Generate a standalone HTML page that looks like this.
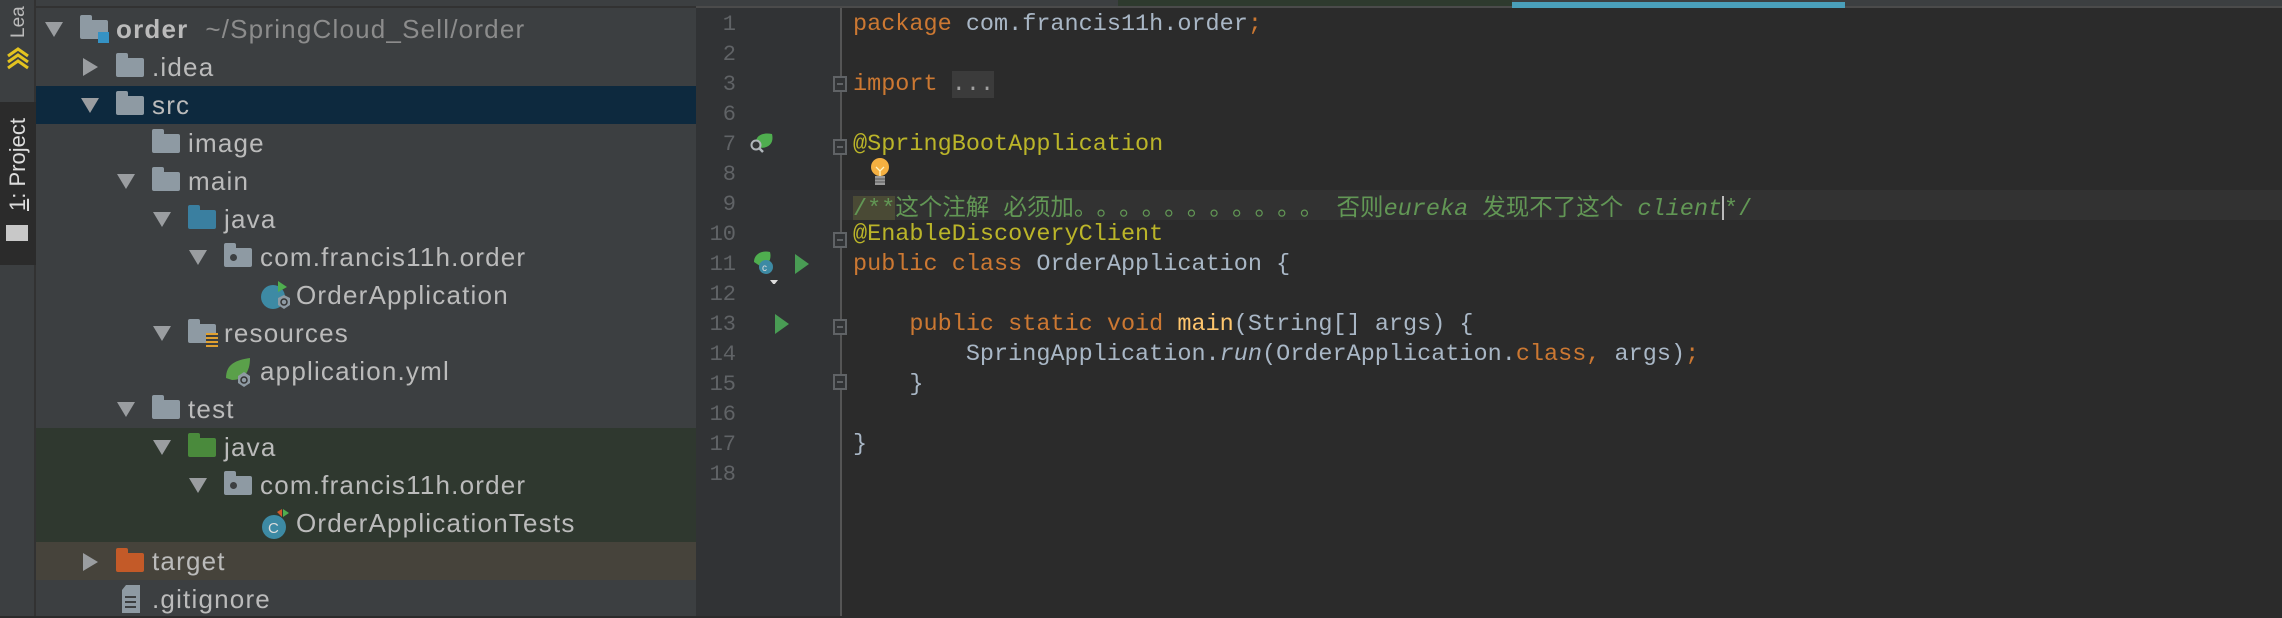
<!DOCTYPE html>
<html><head><meta charset="utf-8">
<style>
*{margin:0;padding:0;box-sizing:border-box}
body{width:2282px;height:616px;overflow:hidden;background:#2b2b2b;position:relative;font-family:"Liberation Sans","Noto Sans CJK SC",sans-serif}
.abs{position:absolute}
#strip{left:0;top:0;width:36px;height:616px;background:#3c3f41;border-right:2px solid #323232}
#ptab{left:0;top:102px;width:36px;height:163px;background:#2b2b2b}
#panel{left:36px;top:0;width:660px;height:616px;background:#3c3f41}
.row{position:absolute;left:36px;width:660px;height:38px}
.t{position:absolute;font-size:26px;letter-spacing:1.2px;color:#bbbbbb;line-height:38px;white-space:nowrap}
.arr{position:absolute;width:0;height:0}
.down{border-left:9px solid transparent;border-right:9px solid transparent;border-top:15px solid #9a9da0}
.right{border-top:9px solid transparent;border-bottom:9px solid transparent;border-left:15px solid #9a9da0}
.fold{position:absolute;width:28px;height:19px;border-radius:0 2px 2px 2px}
.fold:before{content:"";position:absolute;left:0;top:-5px;width:12px;height:6px;background:inherit;border-radius:2px 2px 0 0}
#gutter{left:696px;top:8px;width:146px;height:608px;background:#313335}
#sep{left:840px;top:8px;width:2px;height:608px;background:#555}
.ln{position:absolute;left:696px;width:40px;text-align:right;font-family:"Liberation Mono",monospace;font-size:22px;color:#606366;line-height:30px}
.code{position:absolute;left:853px;font-family:"Liberation Mono","Noto Sans CJK SC",monospace;font-size:23.5px;line-height:30px;color:#a9b7c6;white-space:pre}
.k{color:#cc7832}.a{color:#bbb529}.m{color:#ffc66d}.c{color:#629755}
.fm{position:absolute;left:833px;width:14px;height:16px;border:2px solid #606366;background:#313335}
.fm:after{content:"";position:absolute;left:2px;top:5px;width:6px;height:2px;background:#606366}
.run{position:absolute;width:0;height:0;border-top:10px solid transparent;border-bottom:10px solid transparent;border-left:14px solid #499c54}
.dot{display:inline-block;width:22.6px;font-family:"Noto Sans CJK SC",sans-serif;vertical-align:baseline;line-height:30px}
</style></head><body>
<div id="strip" class="abs"></div>
<div class="abs" style="left:4px;top:2px;width:30px;height:36px;overflow:hidden"><div style="transform:rotate(-90deg);transform-origin:left top;position:absolute;left:4px;top:36px;font-size:19px;color:#bbb">Lea</div></div>
<svg class="abs" style="left:6px;top:44px" width="24" height="30"><path d="M2 12 L12 5 L22 12 M2 18 L12 11 L22 18 M2 24 L12 17 L22 24" stroke="#e3c320" stroke-width="3" fill="none"/></svg>
<div id="ptab" class="abs"></div>
<div class="abs" style="left:5px;top:211px;width:1px;height:1px"><div style="transform:rotate(-90deg);transform-origin:left top;position:absolute;left:0;top:0;font-size:22px;line-height:26px;color:#ddd;white-space:nowrap"><span style="text-decoration:underline">1</span>: Project</div></div>
<div class="abs" style="left:6px;top:225px;width:22px;height:16px;background:#c8c8c8"></div>
<div id="panel" class="abs"></div>
<div class="abs" style="left:36px;top:6px;width:660px;height:2px;background:#323232"></div>

<div class="row" style="top:86px;background:#0d293e"></div>
<div class="row" style="top:428px;height:114px;background:#2f382f"></div>
<div class="row" style="top:542px;background:#46433b"></div>

<div class="arr down" style="left:45px;top:22px"></div>
<div class="fold" style="left:80px;top:20px;background:#8e9aa3"></div>
<div class="abs" style="left:98px;top:32px;width:11px;height:11px;background:#3592c4"></div>
<div class="t" style="left:116px;top:10px"><b>order</b> <span style="color:#8c8c8c">&nbsp;~/SpringCloud_Sell/order</span></div>
<div class="arr right" style="left:83px;top:58px"></div>
<div class="fold" style="left:116px;top:58px;background:#8e9aa3"></div>
<div class="t" style="left:152px;top:48px">.idea</div>
<div class="arr down" style="left:81px;top:98px"></div>
<div class="fold" style="left:116px;top:96px;background:#8e9aa3"></div>
<div class="t" style="left:152px;top:86px">src</div>
<div class="fold" style="left:152px;top:134px;background:#8e9aa3"></div>
<div class="t" style="left:188px;top:124px">image</div>
<div class="arr down" style="left:117px;top:174px"></div>
<div class="fold" style="left:152px;top:172px;background:#8e9aa3"></div>
<div class="t" style="left:188px;top:162px">main</div>
<div class="arr down" style="left:153px;top:212px"></div>
<div class="fold" style="left:188px;top:210px;background:#3a7fa0"></div>
<div class="t" style="left:224px;top:200px">java</div>
<div class="arr down" style="left:189px;top:250px"></div>
<div class="fold" style="left:224px;top:248px;background:#8e9aa3"></div>
<div class="abs" style="left:230px;top:254px;width:7px;height:7px;border-radius:50%;background:#3c3f41"></div>
<div class="t" style="left:260px;top:238px">com.francis11h.order</div>
<svg class="abs" style="left:260px;top:280px" width="32" height="34"><circle cx="13" cy="17" r="12" fill="#3d8aa4"/><path d="M18 1 L27 7 L18 12Z" fill="#4fae4f"/><polygon points="18,18 24,15 30,18 30,25 24,29 18,25" fill="#8e9aa3"/><circle cx="24" cy="22" r="3" stroke="#333" stroke-width="1.5" fill="none"/></svg>
<div class="t" style="left:296px;top:276px">OrderApplication</div>
<div class="arr down" style="left:153px;top:326px"></div>
<div class="fold" style="left:188px;top:324px;background:#8e9aa3"></div>
<div class="abs" style="left:206px;top:333px;width:12px;height:14px;background:repeating-linear-gradient(#e0a030 0 2px,#3c3f41 2px 4px)"></div>
<div class="t" style="left:224px;top:314px">resources</div>
<svg class="abs" style="left:224px;top:356px" width="32" height="34"><path d="M2 22 C2 8 12 4 26 2 C26 16 20 24 8 24 Z" fill="#5aa04a"/><polygon points="14,20 20,16 26,20 26,27 20,31 14,27" fill="#8e9aa3"/><circle cx="20" cy="24" r="3" stroke="#333" stroke-width="1.5" fill="none"/></svg>
<div class="t" style="left:260px;top:352px">application.yml</div>
<div class="arr down" style="left:117px;top:402px"></div>
<div class="fold" style="left:152px;top:400px;background:#8e9aa3"></div>
<div class="t" style="left:188px;top:390px">test</div>
<div class="arr down" style="left:153px;top:440px"></div>
<div class="fold" style="left:188px;top:438px;background:#4a8a3c"></div>
<div class="t" style="left:224px;top:428px">java</div>
<div class="arr down" style="left:189px;top:478px"></div>
<div class="fold" style="left:224px;top:476px;background:#8e9aa3"></div>
<div class="abs" style="left:230px;top:482px;width:7px;height:7px;border-radius:50%;background:#3c3f41"></div>
<div class="t" style="left:260px;top:466px">com.francis11h.order</div>
<svg class="abs" style="left:260px;top:508px" width="32" height="34"><circle cx="14" cy="19" r="12" fill="#3d8aa4"/><text x="8" y="25" font-size="15" fill="#ddd" font-family="Liberation Sans">C</text><path d="M17 4 L22 1 L22 9Z" fill="#d0592c"/><path d="M23 1 L29 5 L23 9Z" fill="#4fae4f"/></svg>
<div class="t" style="left:296px;top:504px">OrderApplicationTests</div>
<div class="arr right" style="left:83px;top:553px"></div>
<div class="fold" style="left:116px;top:553px;background:#c35a28"></div>
<div class="t" style="left:152px;top:542px">target</div>
<svg class="abs" style="left:120px;top:584px" width="22" height="30"><path d="M6 1 H20 V29 H2 V6 Z" fill="#8e9aa3"/><path d="M5 13H16M5 18H16M5 23H16" stroke="#3c3f41" stroke-width="2"/></svg>
<div class="t" style="left:152px;top:580px">.gitignore</div>

<div class="abs" style="left:696px;top:0;width:1586px;height:8px;background:#3c3f41"></div>
<div class="abs" style="left:696px;top:6px;width:1586px;height:2px;background:#4b4b4b"></div>
<div class="abs" style="left:1118px;top:0;width:394px;height:6px;background:#2e3a2e"></div>
<div class="abs" style="left:1512px;top:2px;width:333px;height:6px;background:#4a9fba"></div>

<div id="gutter" class="abs"></div>
<div class="abs" style="left:842px;top:190px;width:1440px;height:30px;background:#323232"></div>
<div id="sep" class="abs"></div>

<div class="ln" style="top:10px">1</div>
<div class="ln" style="top:40px">2</div>
<div class="ln" style="top:70px">3</div>
<div class="ln" style="top:100px">6</div>
<div class="ln" style="top:130px">7</div>
<div class="ln" style="top:160px">8</div>
<div class="ln" style="top:190px">9</div>
<div class="ln" style="top:220px">10</div>
<div class="ln" style="top:250px">11</div>
<div class="ln" style="top:280px">12</div>
<div class="ln" style="top:310px">13</div>
<div class="ln" style="top:340px">14</div>
<div class="ln" style="top:370px">15</div>
<div class="ln" style="top:400px">16</div>
<div class="ln" style="top:430px">17</div>
<div class="ln" style="top:460px">18</div>

<svg class="abs" style="left:748px;top:130px" width="28" height="26"><path d="M8 16 C6 6 14 2 24 4 C26 12 22 18 12 18Z" fill="#4fae4f"/><circle cx="8" cy="15" r="4.5" stroke="#b0b6bb" stroke-width="2" fill="#313335"/><path d="M11 18 L15 22" stroke="#b0b6bb" stroke-width="2.5"/></svg>
<svg class="abs" style="left:750px;top:248px" width="30" height="36"><path d="M4 14 C4 6 12 2 20 4 C22 12 18 18 10 18Z" fill="#4fae4f"/><circle cx="16" cy="19" r="7" fill="#3d8aa4"/><text x="12" y="23" font-size="10" fill="#ddd" font-family="Liberation Sans">c</text><path d="M20 32 L28 32 L24 37Z" fill="#ddd"/></svg>
<div class="run" style="left:795px;top:254px"></div>
<div class="run" style="left:775px;top:314px"></div>
<div class="fm" style="left:833px;top:76px"></div>
<div class="fm" style="left:833px;top:139px"></div>
<div class="fm" style="left:833px;top:232px"></div>
<div class="fm" style="left:833px;top:319px"></div>
<div class="fm" style="left:833px;top:374px"></div>
<svg class="abs" style="left:869px;top:157px" width="24" height="32"><circle cx="11" cy="10" r="9" fill="#f5b041"/><path d="M7 10 L11 14 L15 10 M11 14 V19" stroke="#fff3c0" stroke-width="1.3" fill="none"/><rect x="6" y="19" width="10" height="9" fill="#9a9a9a"/><path d="M6 22H16M6 25H16" stroke="#555" stroke-width="1"/></svg>

<div class="code" style="top:10px"><span class="k">package</span> com.francis11h.order<span class="k">;</span></div>
<div class="code" style="top:70px"><span class="k">import</span> <span style="background:#3b3b3b;color:#a0a0a0">...</span></div>
<div class="code" style="top:130px"><span class="a">@SpringBootApplication</span></div>
<div class="code" style="top:190px;height:30px;overflow:hidden"><span class="c"><span style="background:#4a4a35">/**</span>这个注解 必须加<span class="dot">。</span><span class="dot">。</span><span class="dot">。</span><span class="dot">。</span><span class="dot">。</span><span class="dot">。</span><span class="dot">。</span><span class="dot">。</span><span class="dot">。</span><span class="dot">。</span><span class="dot">。</span> 否则<i>eureka</i> 发现不了这个 <i>client</i><span style="border-left:2px solid #bbb">*/</span></span></div>
<div class="code" style="top:220px"><span class="a">@EnableDiscoveryClient</span></div>
<div class="code" style="top:250px"><span class="k">public class</span> OrderApplication {</div>
<div class="code" style="top:310px">    <span class="k">public static void</span> <span class="m">main</span>(String[] args) {</div>
<div class="code" style="top:340px">        SpringApplication.<i>run</i>(OrderApplication.<span class="k">class</span><span class="k">,</span> args)<span class="k">;</span></div>
<div class="code" style="top:370px">    }</div>
<div class="code" style="top:430px">}</div>
</body></html>
